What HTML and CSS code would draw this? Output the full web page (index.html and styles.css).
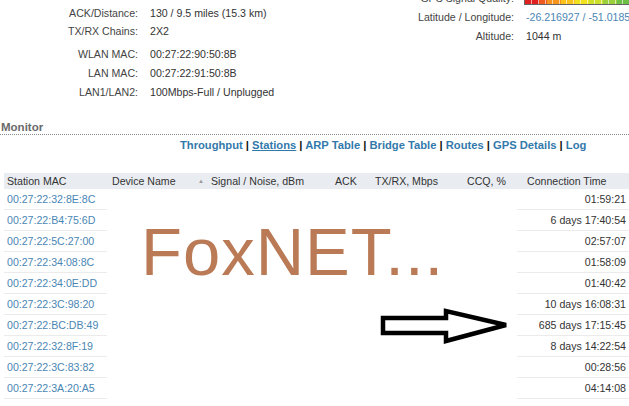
FILE: index.html
```html
<!DOCTYPE html>
<html>
<head>
<meta charset="utf-8">
<link rel="stylesheet" href="styles.css">
</head>
<body>
<div class="info">
  <div class="info-left">
    <div class="kv kv-a">
      <span class="k">ACK/Distance:</span><span class="v">130 / 9.5 miles (15.3 km)</span>
      <span class="k">TX/RX Chains:</span><span class="v">2X2</span>
    </div>
    <div class="kv kv-b">
      <span class="k">WLAN MAC:</span><span class="v">00:27:22:90:50:8B</span>
      <span class="k">LAN MAC:</span><span class="v">00:27:22:91:50:8B</span>
      <span class="k">LAN1/LAN2:</span><span class="v">100Mbps-Full / Unplugged</span>
    </div>
  </div>
  <div class="info-right kv">
    <span class="k">GPS Signal Quality:</span><span class="v"><span class="gpsbar"></span></span>
    <span class="k">Latitude / Longitude:</span><span class="v link">-26.216927 / -51.0185</span>
    <span class="k">Altitude:</span><span class="v">1044 m</span>
  </div>
</div>

<div class="monitor-title">Monitor</div>
<div class="nav">
  <a class="nl">Throughput</a> | <a class="nl cur">Stations</a> | <a class="nl">ARP Table</a> | <a class="nl">Bridge Table</a> | <a class="nl">Routes</a> | <a class="nl">GPS Details</a> | <a class="nl">Log</a>
</div>

<div class="stations">
  <div class="thead">
    <div class="th">Station MAC</div>
    <div class="th">Device Name</div>
    <div class="th"><span class="sort">▲</span>Signal / Noise, dBm</div>
    <div class="th">ACK</div>
    <div class="th">TX/RX, Mbps</div>
    <div class="th">CCQ, %</div>
    <div class="th th-time">Connection Time</div>
  </div>
  <div class="tr"><div class="td mac">00:27:22:32:8E:8C</div><div></div><div></div><div></div><div></div><div></div><div class="td time">01:59:21</div></div>
  <div class="tr"><div class="td mac">00:27:22:B4:75:6D</div><div></div><div></div><div></div><div></div><div></div><div class="td time">6 days 17:40:54</div></div>
  <div class="tr"><div class="td mac">00:27:22:5C:27:00</div><div></div><div></div><div></div><div></div><div></div><div class="td time">02:57:07</div></div>
  <div class="tr"><div class="td mac">00:27:22:34:08:8C</div><div></div><div></div><div></div><div></div><div></div><div class="td time">01:58:09</div></div>
  <div class="tr"><div class="td mac">00:27:22:34:0E:DD</div><div></div><div></div><div></div><div></div><div></div><div class="td time">01:40:42</div></div>
  <div class="tr"><div class="td mac">00:27:22:3C:98:20</div><div></div><div></div><div></div><div></div><div></div><div class="td time">10 days 16:08:31</div></div>
  <div class="tr"><div class="td mac">00:27:22:BC:DB:49</div><div></div><div></div><div></div><div></div><div></div><div class="td time">685 days 17:15:45</div></div>
  <div class="tr"><div class="td mac">00:27:22:32:8F:19</div><div></div><div></div><div></div><div></div><div></div><div class="td time">8 days 14:22:54</div></div>
  <div class="tr"><div class="td mac">00:27:22:3C:83:82</div><div></div><div></div><div></div><div></div><div></div><div class="td time">00:28:56</div></div>
  <div class="tr"><div class="td mac">00:27:22:3A:20:A5</div><div></div><div></div><div></div><div></div><div></div><div class="td time">04:14:08</div></div>
</div>

<div class="foxnet">FoxNET...</div>
<svg class="arrow" width="140" height="44" viewBox="0 0 140 44">
  <path d="M5 12 H68 V5 L128 19 L68 35 V27 H5 Z" fill="#fff" stroke="#000" stroke-width="4.5" stroke-linejoin="miter"/>
</svg>
</body>
</html>
```

FILE: styles.css
```css
html, body {
  margin: 0;
  padding: 0;
  overflow: hidden;
  background: #fff;
}
body {
  font-family: "Liberation Sans", Arial, sans-serif;
  font-size: 10.6px;
  color: #333;
  width: 629px;
  height: 406px;
  position: relative;
}
.info {
  display: flex;
  align-items: flex-start;
  height: 102px;
}
.info-left {
  flex: 0 0 400px;
  margin-top: 4px;
}
.kv {
  display: grid;
  grid-template-columns: 138px auto;
  column-gap: 12px;
  white-space: nowrap;
}
.kv .k {
  text-align: right;
  color: #444;
}
.kv-a {
  grid-auto-rows: 18px;
  line-height: 18px;
}
.kv-b {
  margin-top: 5px;
  grid-auto-rows: 19px;
  line-height: 19px;
}
.info-right {
  grid-template-columns: 114px auto;
  grid-auto-rows: 19px;
  line-height: 19px;
  margin-top: -11px;
}
.link {
  color: #4a86b4;
}
.gpsbar {
  display: inline-block;
  vertical-align: middle;
  width: 120px;
  height: 10px;
  margin-left: -2px;
  border: 1px solid #666;
  background:
    repeating-linear-gradient(90deg, transparent 0 6px, rgba(255,255,255,0.6) 6px 7px),
    linear-gradient(90deg, #e01f1f 0 14px, #ef5a1e 14px 22px, #f7941d 22px 36px, #fbc21a 36px 50px, #f2e21c 50px 64px, #cfe02a 64px 78px, #9ccf3c 78px 92px, #6dbf46 92px);
}
.monitor-title {
  margin-top: 18px;
  padding-left: 1px;
  line-height: 14px;
  font-size: 11.5px;
  font-weight: bold;
  color: #6a6a6a;
  border-bottom: 1px dotted #8a8a8a;
}
.nav {
  margin-top: 3px;
  padding-left: 180px;
  line-height: 14px;
  font-size: 11.2px;
  font-weight: bold;
  color: #111;
  white-space: nowrap;
}
.nl {
  color: #3279ab;
}
.nl.cur {
  text-decoration: underline;
}
.stations {
  margin-top: 21px;
  margin-left: 4px;
  width: 625px;
}
.thead, .tr {
  display: grid;
  grid-template-columns: 103px 84px 135px 38px 90px 51px 112px;
  column-gap: 2px;
}
.thead {
  background: #e9edf1;
  height: 16px;
  line-height: 16px;
}
.th {
  padding-left: 3px;
  color: #333;
  white-space: nowrap;
}
.th-time {
  padding-left: 10px;
}
.sort {
  font-size: 6px;
  color: #999;
  vertical-align: 2px;
  margin-right: 7px;
}
.tr {
  height: 21px;
}
.tr > div {
  line-height: 20px;
  height: 20px;
}
.td {
  border-bottom: 1px solid #ebebeb;
  white-space: nowrap;
}
.mac {
  padding-left: 3px;
  color: #4a86b4;
}
.time {
  text-align: right;
  padding-right: 3px;
  color: #333;
}
.foxnet {
  position: absolute;
  left: 141px;
  top: 218px;
  font-family: "Liberation Sans", Arial, sans-serif;
  font-size: 67px;
  line-height: 67px;
  letter-spacing: 1px;
  color: #ba7a56;
  white-space: nowrap;
}
.arrow {
  position: absolute;
  left: 378px;
  top: 306px;
}
```
